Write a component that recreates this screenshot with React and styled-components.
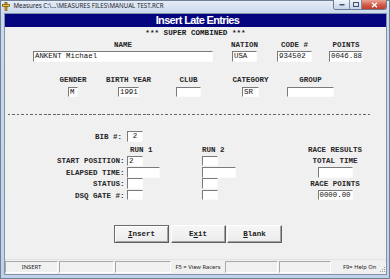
import React from 'react';
import styled, { createGlobalStyle } from 'styled-components';

const MONO = `"Liberation Mono", "Courier New", monospace`;
const SANS = `"Noto Sans", "Liberation Sans", Arial, sans-serif`;

const Global = createGlobalStyle`
  html, body { margin: 0; padding: 0; width: 390px; height: 279px; overflow: hidden; background: #c6d6ea; }
  #root { width: 390px; height: 279px; }
`;

const Window = styled.div`
  box-sizing: border-box;
  width: 390px;
  height: 279px;
  display: flex;
  flex-direction: column;
  border: 1px solid #6f8098;
  background: linear-gradient(180deg, #e4ecf6 0px, #cbdaed 12px, #c0d2e9 100%);
`;

const TitleBar = styled.div`
  height: 12px;
  display: flex;
  align-items: flex-start;
  flex: none;
`;

const AppIcon = styled.svg`
  width: 8px;
  height: 9px;
  margin: 1px 0 0 1px;
  flex: none;
`;

const TitleText = styled.div`
  font-family: ${SANS};
  font-size: 6.2px;
  line-height: 10px;
  color: #1e2530;
  margin-left: 3.5px;
  white-space: nowrap;
`;

const Controls = styled.div`
  margin-left: auto;
  margin-right: 2px;
  margin-top: -1px;
  display: flex;
  height: 9px;
  border: 1px solid #6c7c93;
  border-top: none;
  border-radius: 0 0 3px 3px;
  overflow: hidden;
`;

const CtlButton = styled.div`
  width: ${p => p.$w}px;
  height: 9px;
  display: flex;
  align-items: center;
  justify-content: center;
  background: ${p => (p.$close
    ? 'linear-gradient(180deg, #eaa497 0%, #d4604f 50%, #c23a2a 100%)'
    : 'linear-gradient(180deg, #f1f5fb 0%, #dbe5f2 50%, #c7d5e8 100%)')};
  border-left: ${p => (p.$first ? 'none' : '1px solid #7f8ea4')};
  box-sizing: border-box;
`;

const Body = styled.div`
  flex: 1;
  display: flex;
  flex-direction: column;
  padding: 0 2px 3px 3px;
  min-height: 0;
`;

const Client = styled.div`
  flex: 1;
  display: flex;
  flex-direction: column;
  background: #f0f0f0;
  border: 1px solid #8293a9;
  min-height: 0;
`;

const Banner = styled.div`
  height: 13px;
  flex: none;
  background: #05057f;
  color: #fff;
  font-family: "Liberation Sans", Arial, sans-serif;
  font-weight: bold;
  font-size: 11px;
  letter-spacing: -0.65px;
  line-height: 13px;
  text-align: center;
  padding-left: 4px;
`;

const SuperLine = styled.div`
  margin-top: 2px;
  height: 9px;
  line-height: 9px;
  font-family: ${MONO};
  font-weight: bold;
  font-size: 7.6px;
  color: #1a1a1a;
  text-align: center;
  white-space: pre;
`;

const FieldRow = styled.div`
  display: flex;
  align-items: flex-start;
  margin-top: ${p => p.$mt}px;
`;

const Field = styled.div`
  flex: none;
  display: flex;
  flex-direction: column;
  align-items: center;
  gap: 2.5px;
  width: ${p => p.$w}px;
  margin-left: ${p => p.$ml}px;
`;

const Label = styled.div`
  font-family: ${MONO};
  font-weight: bold;
  font-size: 7.5px;
  line-height: 8px;
  height: 8px;
  color: #262626;
  white-space: nowrap;
`;

const Input = styled.div`
  box-sizing: border-box;
  flex: none;
  width: ${p => p.$w}px;
  height: ${p => p.$h || 10.5}px;
  background: #fff;
  border-top: 1px solid #7a7a7a;
  border-left: 1px solid #7a7a7a;
  border-right: 1px solid #fbfbfb;
  border-bottom: 1px solid #fbfbfb;
  padding: 0 1px;
  font-family: ${MONO};
  font-size: 7.4px;
  line-height: 9px;
  color: #111;
  white-space: nowrap;
  overflow: hidden;
  text-align: ${p => p.$align || 'left'};
`;

const Dashes = styled.div`
  margin: 17px 0 0 3px;
  width: 364px;
  height: 1px;
  background: repeating-linear-gradient(90deg, #666 0 2.5px, transparent 2.5px 4.5px);
`;

const Grid = styled.div`
  display: grid;
  grid-template-columns: 122px 75px 83px 100px;
  grid-template-rows: 11px 3.2px 8px 2px repeat(4, 11.4px);
  margin-top: 16.2px;
`;

const Cell = styled.div`
  grid-column: ${p => p.$col};
  grid-row: ${p => p.$row};
  display: flex;
  align-items: ${p => p.$v || 'center'};
  justify-content: ${p => p.$h || 'flex-start'};
  padding-right: ${p => p.$pr || 0}px;
  padding-left: ${p => p.$pl || 0}px;
  min-width: 0;
`;

const ButtonRow = styled.div`
  display: flex;
  gap: 1.5px;
  margin: 23.7px 0 0 109px;
`;

const Button = styled.div`
  box-sizing: border-box;
  width: 55px;
  height: 18px;
  display: flex;
  align-items: center;
  justify-content: center;
  background: linear-gradient(180deg, #f6f6f6 0%, #ececec 100%);
  border-top: 1px solid ${p => (p.$default ? '#6b6b6b' : '#ffffff')};
  border-left: 1px solid ${p => (p.$default ? '#6b6b6b' : '#ffffff')};
  border-right: 1px solid #5e5e5e;
  border-bottom: 1px solid #5e5e5e;
  box-shadow: ${p => (p.$default
    ? 'inset 1px 1px 0 #ffffff, inset -1px -1px 0 #a3a3a3'
    : 'inset -1px -1px 0 #a3a3a3')};
  font-family: ${MONO};
  font-weight: bold;
  font-size: 7.5px;
  color: #1a1a1a;
  u { text-decoration: underline; text-underline-offset: 1px; }
`;

const StatusBar = styled.div`
  margin-top: auto;
  height: 14px;
  display: flex;
  align-items: stretch;
  flex: none;
  border-top: 1px solid #e2e2e2;
`;

const Panel = styled.div`
  box-sizing: border-box;
  width: ${p => p.$w}px;
  flex: none;
  display: flex;
  align-items: center;
  justify-content: ${p => p.$justify || 'center'};
  padding-left: ${p => p.$pl || 0}px;
  margin: 1px 1px 1px 0;
  border-top: ${p => (p.$flat ? 'none' : '1px solid #a9a9a9')};
  border-left: ${p => (p.$flat ? 'none' : '1px solid #a9a9a9')};
  border-right: ${p => (p.$flat ? 'none' : '1px solid #ffffff')};
  border-bottom: ${p => (p.$flat ? 'none' : '1px solid #ffffff')};
  font-family: ${SANS};
  font-size: 5.8px;
  color: #222;
  white-space: nowrap;
  position: relative;
`;

const Grip = styled.svg`
  position: absolute;
  right: 0;
  bottom: 0;
  width: 6px;
  height: 6px;
`;

const Ul = ({ children }) => <u>{children}</u>;

export default function App() {
  return (
    <>
      <Global />
      <Window>
        <TitleBar>
          <AppIcon viewBox="0 0 8 9">
            <rect x="3" y="0.5" width="2" height="8" fill="#e0b020" stroke="#5a3d00" strokeWidth="0.6" />
            <rect x="0.5" y="2.5" width="7" height="2" fill="#f0c830" stroke="#5a3d00" strokeWidth="0.6" />
          </AppIcon>
          <TitleText>Measures C:\...\MEASURES FILES\MANUAL TEST.RCR</TitleText>
          <Controls>
            <CtlButton $w={15} $first>
              <svg width="6" height="3" viewBox="0 0 6 3"><rect x="0.5" y="1" width="5" height="1.5" fill="#44536a" /></svg>
            </CtlButton>
            <CtlButton $w={12}>
              <svg width="6" height="5" viewBox="0 0 6 5"><rect x="0.5" y="0.5" width="5" height="4" fill="none" stroke="#44536a" strokeWidth="1" /></svg>
            </CtlButton>
            <CtlButton $w={25} $close>
              <svg width="7" height="6" viewBox="0 0 7 6"><path d="M1 0.8 L6 5.2 M6 0.8 L1 5.2" stroke="#fff" strokeWidth="1.4" /></svg>
            </CtlButton>
          </Controls>
        </TitleBar>
        <Body>
          <Client>
            <Banner>Insert Late Entries</Banner>
            <SuperLine>*** SUPER COMBINED ***</SuperLine>

            <FieldRow $mt={2.5}>
              <Field $w={180} $ml={28}>
                <Label>NAME</Label>
                <Input $w={180}>ANKENT Michael</Input>
              </Field>
              <Field $w={25} $ml={19}>
                <Label>NATION</Label>
                <Input $w={25}>USA</Input>
              </Field>
              <Field $w={35} $ml={20}>
                <Label>CODE #</Label>
                <Input $w={35}>934502</Input>
              </Field>
              <Field $w={34} $ml={17}>
                <Label>POINTS</Label>
                <Input $w={34}>0046.88</Input>
              </Field>
            </FieldRow>

            <FieldRow $mt={14.8}>
              <Field $w={10} $ml={63}>
                <Label>GENDER</Label>
                <Input $w={10}>M</Input>
              </Field>
              <Field $w={21} $ml={40}>
                <Label>BIRTH YEAR</Label>
                <Input $w={21}>1991</Input>
              </Field>
              <Field $w={25} $ml={37}>
                <Label>CLUB</Label>
                <Input $w={25} />
              </Field>
              <Field $w={17} $ml={41}>
                <Label>CATEGORY</Label>
                <Input $w={17}>SR</Input>
              </Field>
              <Field $w={47} $ml={28}>
                <Label>GROUP</Label>
                <Input $w={47} />
              </Field>
            </FieldRow>

            <Dashes />

            <Grid>
              <Cell $col={1} $row={1} $h="flex-end" $pr={5}><Label>BIB #:</Label></Cell>
              <Cell $col={2} $row={1} $v="flex-start"><Input $w={16} $align="center">2</Input></Cell>

              <Cell $col={2} $row={3} $pl={3}><Label>RUN 1</Label></Cell>
              <Cell $col={3} $row={3}><Label>RUN 2</Label></Cell>
              <Cell $col={4} $row={3} $h="center"><Label>RACE RESULTS</Label></Cell>

              <Cell $col={1} $row={5} $h="flex-end" $pr={2.5}><Label>START POSITION:</Label></Cell>
              <Cell $col={2} $row={5} $v="flex-start"><Input $w={16}>2</Input></Cell>
              <Cell $col={3} $row={5} $v="flex-start"><Input $w={16} /></Cell>
              <Cell $col={4} $row={5} $h="center"><Label>TOTAL TIME</Label></Cell>

              <Cell $col={1} $row={6} $h="flex-end" $pr={2.5}><Label>ELAPSED TIME:</Label></Cell>
              <Cell $col={2} $row={6} $v="flex-start"><Input $w={33} /></Cell>
              <Cell $col={3} $row={6} $v="flex-start"><Input $w={34} /></Cell>
              <Cell $col={4} $row={6} $h="center" $v="flex-start"><Input $w={35} /></Cell>

              <Cell $col={1} $row={7} $h="flex-end" $pr={2.5}><Label>STATUS:</Label></Cell>
              <Cell $col={2} $row={7} $v="flex-start"><Input $w={16} /></Cell>
              <Cell $col={3} $row={7} $v="flex-start"><Input $w={16} /></Cell>
              <Cell $col={4} $row={7} $h="center"><Label>RACE POINTS</Label></Cell>

              <Cell $col={1} $row={8} $h="flex-end" $pr={2.5}><Label>DSQ GATE #:</Label></Cell>
              <Cell $col={2} $row={8} $v="flex-start"><Input $w={16} /></Cell>
              <Cell $col={3} $row={8} $v="flex-start"><Input $w={16} /></Cell>
              <Cell $col={4} $row={8} $h="center" $v="flex-start"><Input $w={35}>0000.00</Input></Cell>
            </Grid>

            <ButtonRow>
              <Button $default><span><Ul>I</Ul>nsert</span></Button>
              <Button><span>E<Ul>x</Ul>it</span></Button>
              <Button><span><Ul>B</Ul>lank</span></Button>
            </ButtonRow>

            <StatusBar>
              <Panel $w={53}>INSERT</Panel>
              <Panel $w={55} />
              <Panel $w={56} />
              <Panel $w={52} $flat>F5 = View Racers</Panel>
              <Panel $w={53} />
              <Panel $w={52} />
              <Panel $w={54} $flat $justify="flex-start" $pl={11}>
                F9= Help On
                <Grip viewBox="0 0 6 6">
                  <rect x="4" y="4" width="1" height="1" fill="#9a9a9a" />
                  <rect x="2" y="4" width="1" height="1" fill="#9a9a9a" />
                  <rect x="4" y="2" width="1" height="1" fill="#9a9a9a" />
                  <rect x="0" y="4" width="1" height="1" fill="#9a9a9a" />
                  <rect x="2" y="2" width="1" height="1" fill="#9a9a9a" />
                  <rect x="4" y="0" width="1" height="1" fill="#9a9a9a" />
                </Grip>
              </Panel>
            </StatusBar>
          </Client>
        </Body>
      </Window>
    </>
  );
}
